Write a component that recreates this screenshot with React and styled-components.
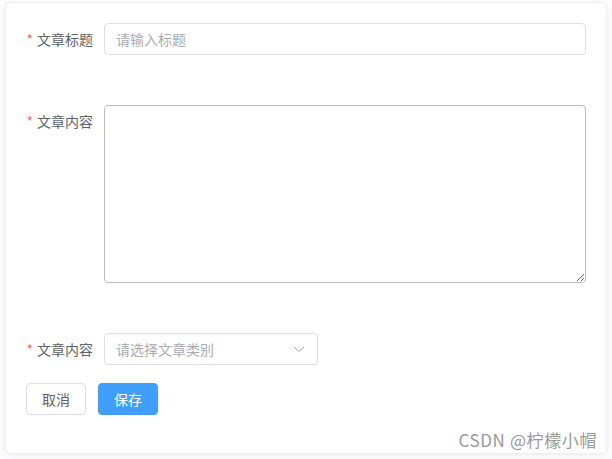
import React from "react";
import styled, { createGlobalStyle } from "styled-components";

const Global = createGlobalStyle`
  html, body { margin: 0; padding: 0; background: #fff; }
  body { font-family: "Noto Sans CJK SC", "Noto Sans", sans-serif; }
  * { box-sizing: border-box; }
`;

const Page = styled.div`
  width: 612px;
  height: 459px;
  padding: 2px 0 0 5px;
  position: relative;
`;

const Card = styled.div`
  width: 602px;
  height: 452px;
  border: 1px solid #ebeef5;
  border-radius: 4px;
  background: #fff;
  box-shadow: 0 2px 12px 0 rgba(0, 0, 0, 0.08);
  padding: 20px;
  display: flex;
  flex-direction: column;
`;

const Item = styled.div`
  display: flex;
  align-items: flex-start;
  margin-bottom: ${(p) => p.$mb}px;
`;

const Label = styled.label`
  width: 78px;
  flex-shrink: 0;
  height: 32px;
  line-height: 31px;
  padding-right: 11px;
  font-size: 14px;
  color: #606266;
  display: flex;
  align-items: center;
  justify-content: flex-end;
`;

const Star = styled.span`
  color: #f56c6c;
  margin-right: 4px;
`;

const Input = styled.input`
  flex: 1;
  height: 32px;
  border: 1px solid #dcdfe6;
  border-radius: 4px;
  padding: 0 11px;
  font-size: 14px;
  font-family: inherit;
  color: #606266;
  outline: none;
  &::placeholder { color: #a8abb2; }
`;

const Textarea = styled.textarea`
  flex: 1;
  height: 178px;
  border: 1px solid #b9bcc3;
  border-radius: 4px;
  padding: 5px 11px;
  font-size: 14px;
  font-family: inherit;
  outline: none;
  resize: vertical;
  display: block;
`;

const Select = styled.div`
  width: 214px;
  height: 32px;
  border: 1px solid #dcdfe6;
  border-radius: 4px;
  padding: 0 11px;
  display: flex;
  align-items: center;
  justify-content: space-between;
  font-size: 14px;
  color: #a8abb2;
`;

const Arrow = styled.svg`
  width: 12px;
  height: 12px;
  margin-right: 1px;
`;

const Actions = styled.div`
  display: flex;
  gap: 12px;
`;

const Button = styled.button`
  width: 60px;
  height: 32px;
  border-radius: 4px;
  font-size: 14px;
  font-family: inherit;
  cursor: pointer;
  border: 1px solid ${(p) => (p.$primary ? "#409eff" : "#dcdfe6")};
  background: ${(p) => (p.$primary ? "#409eff" : "#fff")};
  color: ${(p) => (p.$primary ? "#fff" : "#606266")};
  padding: 0;
`;

const Watermark = styled.div`
  position: absolute;
  right: 15px;
  bottom: 7px;
  font-size: 17px;
  color: #999999;
  font-family: "Noto Sans CJK SC", "Noto Sans", sans-serif;
  text-shadow: 0 0 1px #fff;
  letter-spacing: 0.6px;
`;

export default function App() {
  return (
    <>
      <Global />
      <Page>
        <Card>
          <Item $mb={50}>
            <Label><Star>*</Star>文章标题</Label>
            <Input placeholder="请输入标题" />
          </Item>
          <Item $mb={50}>
            <Label><Star>*</Star>文章内容</Label>
            <Textarea />
          </Item>
          <Item $mb={18}>
            <Label><Star>*</Star>文章内容</Label>
            <Select>
              <span>请选择文章类别</span>
              <Arrow viewBox="0 0 12 12">
                <path d="M1 4 L6 8.5 L11 4" fill="none" stroke="#a8abb2" strokeWidth="1" />
              </Arrow>
            </Select>
          </Item>
          <Actions>
            <Button>取消</Button>
            <Button $primary>保存</Button>
          </Actions>
        </Card>
        <Watermark>CSDN @柠檬小帽</Watermark>
      </Page>
    </>
  );
}
